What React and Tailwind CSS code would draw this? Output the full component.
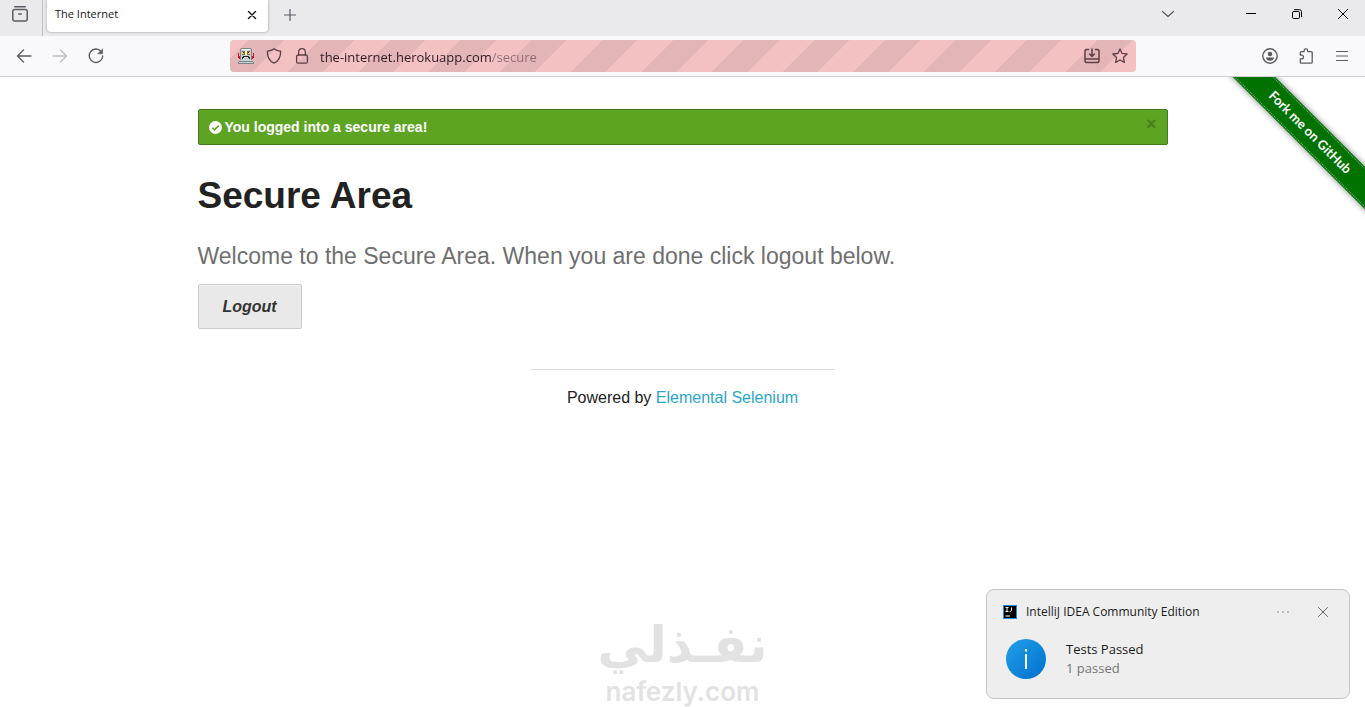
import React from 'react';

const Icon = ({ size = 16, className = '', children }) => (
  <svg
    width={size}
    height={size}
    viewBox={`0 0 ${size} ${size}`}
    fill="none"
    stroke="currentColor"
    strokeLinecap="round"
    strokeLinejoin="round"
    className={`shrink-0 ${className}`}
    aria-hidden="true"
  >
    {children}
  </svg>
);

const IconButton = ({ label, className = '', children }) => (
  <button type="button" aria-label={label} className={`flex shrink-0 items-center justify-center ${className}`}>
    {children}
  </button>
);

const Robot = () => (
  <svg width="16" height="16" viewBox="0 0 16 16" shapeRendering="crispEdges" className="shrink-0" aria-hidden="true">
    <path fill="#7b8589" d="M3 0h10v1H3zM2 1h1v11H2zM13 1h1v11h-1zM1 13h14v1H1zM0 14h16v2H0z" />
    <path fill="#c3d0d4" d="M3 1h10v12H3zM1 14h14v1H1z" />
    <path fill="#f2fafa" d="M4 1h8v1H4zM7 2h2v5H7z" />
    <path fill="#8d6a1c" d="M4 3h3v4H4zM9 3h3v4H9z" />
    <path fill="#f6d04a" d="M4 4h2v2H4zM10 4h2v2h-2z" />
    <path fill="#222" d="M5 4h1v1H5zM10 4h1v1h-1zM5 8h6v1H5zM4 9h8v1H4zM4 10h1v1H4zM11 10h1v1h-1z" />
    <path fill="#e8dcae" d="M6 9h4v1H6z" />
    <path fill="#c4152c" d="M0 5h1v5H0zM1 8h1v3H1zM15 5h1v5h-1zM14 8h1v3h-1z" />
  </svg>
);

const TabStrip = () => (
  <div className="flex h-9 bg-[#eaeaed] text-[#5b5b66]">
    <IconButton label="Firefox View" className="w-[43px] border-r border-[#c0c0c6] pr-[2px] pb-2">
      <Icon>
        <path d="M2.7 .8h10.6" strokeWidth="1.4" />
        <rect x=".8" y="3.6" width="14.4" height="11.4" rx="2" strokeWidth="1.5" />
        <path d="M6.7 8h2.6" strokeWidth="1.5" />
      </Icon>
    </IconButton>
    <div className="ml-1 flex h-8 w-[221px] items-center justify-between rounded-b bg-white pr-[10px] pb-[3px] pl-2 shadow-[0_0_3px_rgba(0,0,0,0.35)]">
      <span className="text-[11px] text-[#15141a]">The Internet</span>
      <IconButton label="Close tab" className="size-3 text-[#15141a]">
        <Icon size={12}>
          <path d="m2.5 2.5 7 7m0-7-7 7" strokeWidth="1.4" />
        </Icon>
      </IconButton>
    </div>
    <IconButton label="New tab" className="ml-3 h-[30px] w-5">
      <Icon size={12}>
        <path d="M6 .5v11M.5 6h11" strokeWidth="1.2" />
      </Icon>
    </IconButton>
    <div className="flex-1" />
    <IconButton label="List all tabs" className="mr-[42px] h-7 w-9">
      <Icon size={12}>
        <path d="m.5 3.5 5.5 5 5.5-5" strokeWidth="1.2" />
      </Icon>
    </IconButton>
    <IconButton label="Minimize" className="h-7 w-[46px] text-black">
      <Icon size={10}>
        <path d="M0 4.5h10" strokeLinecap="butt" />
      </Icon>
    </IconButton>
    <IconButton label="Restore" className="h-7 w-[46px] text-black">
      <Icon size={10}>
        <rect x=".5" y="2.5" width="7" height="7" rx="1.2" />
        <path d="M2.5.7h5a2 2 0 0 1 2 2v5" />
      </Icon>
    </IconButton>
    <IconButton label="Close" className="h-7 w-[45px] text-black">
      <Icon size={10}>
        <path d="m.3.3 9.4 9.4m0-9.4L.3 9.7" />
      </Icon>
    </IconButton>
  </div>
);

const AddressBar = () => (
  <div className="flex h-8 flex-1 items-center gap-3 rounded bg-[#fbeef0] bg-[repeating-linear-gradient(-45deg,rgba(225,60,60,0.25)_0_25px,rgba(175,50,50,0.3)_25px_50px)] px-2 text-[#5c4047]">
    <Robot />
    <Icon>
      <path d="M8 .9c1.8 1.3 4 2 6.6 2.3.2 5.4-1.5 9.6-6.6 12-5.1-2.4-6.8-6.6-6.6-12C4 2.9 6.2 2.2 8 .9z" strokeWidth="1.3" />
    </Icon>
    <Icon>
      <rect x="2.6" y="7" width="10.8" height="8.2" rx="1.5" strokeWidth="1.3" />
      <path d="M4.7 7V4a3.3 3.3 0 0 1 6.6 0v3" strokeWidth="1.3" />
    </Icon>
    <input
      type="text"
      aria-label="Address"
      defaultValue="the-internet.herokuapp.com/secure"
      className="-ml-1 min-w-0 flex-1 bg-[linear-gradient(90deg,#2a1a20_173px,#8f6d74_173px)] bg-clip-text px-[2px] pt-[3px] text-[13px] text-transparent outline-none"
    />
    <IconButton label="Install site">
      <Icon>
        <path
          d="M4.5 1.5h-2A1.5 1.5 0 0 0 1 3v10a1.5 1.5 0 0 0 1.5 1.5h11A1.5 1.5 0 0 0 15 13V3a1.5 1.5 0 0 0-1.5-1.5h-2M1 11h14M8 1v7M5.5 6 8 8.5 10.5 6"
          strokeWidth="1.5"
        />
      </Icon>
    </IconButton>
    <IconButton label="Bookmark this page">
      <Icon>
        <path d="m8 .9 2.1 4.5 5 .6-3.7 3.4 1 5L8 12l-4.4 2.4 1-5L.9 6l5-.6z" strokeWidth="1.3" />
      </Icon>
    </IconButton>
  </div>
);

const Toolbar = () => (
  <div className="flex h-[41px] items-center border-b border-[#cfcfd3] bg-[#f9f9fb] pr-[15px] pl-4 text-[#5b5b66]">
    <div className="flex flex-1 gap-5">
      <IconButton label="Back">
        <Icon>
          <path d="M15 8H1.5m6-6-6 6 6 6" strokeWidth="1.4" />
        </Icon>
      </IconButton>
      <IconButton label="Forward" className="text-[#bdbdc3]">
        <Icon>
          <path d="M1 8h13.5m-6-6 6 6-6 6" strokeWidth="1.4" />
        </Icon>
      </IconButton>
      <IconButton label="Reload">
        <Icon>
          <path d="M13.2 3.5A6.7 6.7 0 1 0 14.7 8" strokeWidth="1.4" />
          <path d="M14.6 1.2v4.6H10z" fill="currentColor" strokeWidth=".6" />
        </Icon>
      </IconButton>
    </div>
    <div className="flex w-[906px]">
      <AddressBar />
    </div>
    <div className="flex flex-1 justify-end gap-5">
      <IconButton label="Account">
        <Icon>
          <circle cx="8" cy="8" r="7.2" strokeWidth="1.4" />
          <circle cx="8" cy="6" r="2.3" fill="currentColor" stroke="none" />
          <path d="M3.8 9.5h8.4c-.3 2-2 3.3-4.2 3.3s-3.9-1.3-4.2-3.3z" fill="currentColor" stroke="none" />
        </Icon>
      </IconButton>
      <IconButton label="Extensions">
        <Icon>
          <path
            d="M2.3 5.5v-.9c0-.6.4-1 1-1h2.8v-.9a1.8 1.8 0 0 1 3.6 0v.9h3.5c.6 0 1 .4 1 1v9.6c0 .6-.4 1-1 1H3.3c-.6 0-1-.4-1-1v-3.3h1.3a1.9 1.9 0 0 0 0-3.8H2.3z"
            strokeWidth="1.3"
          />
        </Icon>
      </IconButton>
      <IconButton label="Menu">
        <Icon>
          <path d="M2.5 3.5h11M2.5 8h11M2.5 12.5h11" strokeWidth="1.2" />
        </Icon>
      </IconButton>
    </div>
  </div>
);

const ForkRibbon = () => (
  <div className="absolute top-0 right-0 size-[149px] overflow-hidden">
    <a
      href="#fork"
      className="absolute top-10 -left-[17px] flex h-[30px] w-[220px] rotate-45 items-center justify-center bg-[#007200] pl-[2px] font-[Lato,sans-serif] text-[13px] font-bold text-white shadow-[0_0_6px_rgba(0,0,0,0.5)] outline-1 -outline-offset-2 outline-[#7fb87f] outline-dotted"
    >
      Fork me on GitHub
    </a>
  </div>
);

const FlashMessage = () => (
  <div className="flex h-9 items-center justify-between rounded-[2px] border border-[#457a1a] bg-[#5da423] px-[10px] text-white">
    <p className="flex items-center gap-[3px] text-[14px] leading-5 font-bold">
      <svg width="13" height="13" viewBox="0 0 13 13" className="shrink-0" aria-hidden="true">
        <circle cx="6.5" cy="6.5" r="6.5" fill="#fff" />
        <path d="m3.3 6.7 2.2 2.2 4.3-4.3" fill="none" stroke="#5da423" strokeWidth="1.5" />
      </svg>
      You logged into a secure area!
    </p>
    <a href="#close" className="pb-[6px] text-[18px] leading-5 font-bold text-[#458019]">
      ×
    </a>
  </div>
);

const Notification = () => (
  <aside className="absolute right-[15px] bottom-2 h-[110px] w-[364px] rounded-lg border border-[#c3c3c3] bg-[#eee] px-4 py-3 font-['Open_Sans',sans-serif] text-[#1b1b1b]">
    <div className="flex h-5 items-center">
      <svg width="14" height="14" viewBox="0 0 14 14" aria-hidden="true">
        <path fill="#1e8cf0" d="M0 0h14v14H0z" />
        <path fill="#000" d="M1 1h12v12H1z" />
        <path d="M2.5 2.5h3M4 2.5v4M2.5 6.5h3M8.5 2.5v2.7c0 1-.6 1.3-1.8 1.3M2.5 11H7" fill="none" stroke="#fff" />
      </svg>
      <span className="ml-[9px] flex-1 text-xs">IntelliJ IDEA Community Edition</span>
      <IconButton label="More options" className="mr-7 text-[#666]">
        <Icon size={12}>
          <path d="M1 6h0M6 6h0M11 6h0" strokeWidth="1.4" />
        </Icon>
      </IconButton>
      <IconButton label="Dismiss" className="mr-1 text-[#666]">
        <Icon size={12}>
          <path d="m1.5 1.5 9 9m0-9-9 9" />
        </Icon>
      </IconButton>
    </div>
    <div className="mt-[17px] ml-[3px] flex items-center gap-5">
      <svg width="40" height="40" viewBox="0 0 40 40" aria-hidden="true">
        <defs>
          <linearGradient id="info" x1="0" y1="0" x2="1" y2="1">
            <stop offset="0" stopColor="#22a0e8" />
            <stop offset="1" stopColor="#0070cf" />
          </linearGradient>
        </defs>
        <circle cx="20" cy="20" r="20" fill="url(#info)" />
        <path d="M19 15h2v15h-2zM19 10h2v2.500h-2z" fill="#fff" />
      </svg>
      <div className="text-[13px] leading-[19px]">
        <p>Tests Passed</p>
        <p className="text-[#757575]">1 passed</p>
      </div>
    </div>
  </aside>
);

const Watermark = () => (
  <div className="pointer-events-none absolute inset-x-0 bottom-0 flex flex-col items-center text-[#e2e2e2]">
    <span lang="ar" dir="rtl" className="font-['DejaVu_Sans',sans-serif] text-[50px] leading-[64px] font-bold">
      نفـذلي
    </span>
    <span className="font-['Inter',sans-serif] text-[26px] leading-[30px] font-semibold">nafezly.com</span>
  </div>
);

const App = () => {
  return (
    <div className="relative flex min-h-screen flex-col overflow-hidden bg-white font-['Liberation_Sans',Arial,sans-serif] text-[#222]">
      <header className="font-['Open_Sans',sans-serif]">
        <TabStrip />
        <Toolbar />
      </header>
      <div className="relative flex-1">
        <ForkRibbon />
        <main className="mx-auto max-w-[1000px] px-[15px] pt-8">
          <FlashMessage />
          <h1 className="mt-[25px] text-[37px] leading-[52px] font-bold">Secure Area</h1>
          <h2 className="mt-[18px] text-[23px] leading-8 text-[#6f6f6f]">
            Welcome to the Secure Area. When you are done click logout below.
          </h2>
          <button
            type="button"
            className="mt-3 h-[45px] w-[104px] rounded-[2px] border border-[#ccc] bg-[#e9e9e9] pt-px text-base font-bold text-[#333] italic shadow-[inset_0_1px_0_rgba(255,255,255,0.5)]"
          >
            Logout
          </button>
        </main>
        <footer className="mx-auto mt-10 w-[304px] border-t border-[#ddd] pt-4 text-center text-base">
          Powered by{' '}
          <a href="#elemental-selenium" className="text-[#2ba6cb]">
            Elemental Selenium
          </a>
        </footer>
      </div>
      <Watermark />
      <Notification />
    </div>
  );
};

export default App;
